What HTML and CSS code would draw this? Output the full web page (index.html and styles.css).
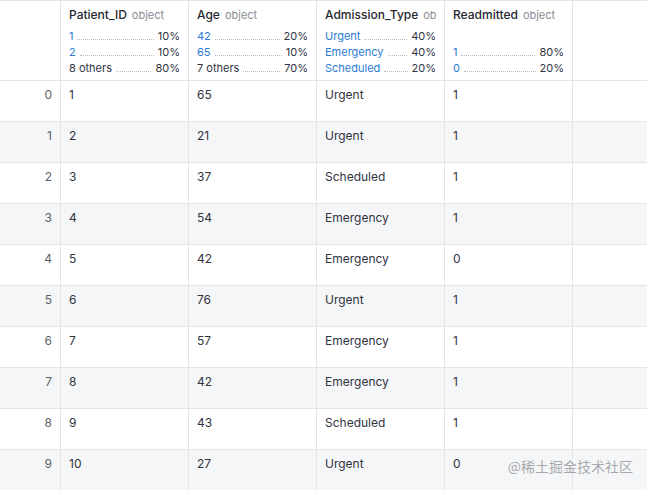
FILE: index.html
```html
<!DOCTYPE html>
<html>
<head>
<meta charset="utf-8">
<link rel="stylesheet" href="styles.css">
</head>
<body>
<div class="grid">
  <div class="hcell idx"></div>
  <div class="hcell">
    <div class="title"><span class="name">Patient_ID</span><span class="type">object</span></div>
    <div class="stats">
      <div class="stat"><span class="val">1</span><span class="dots"></span><span class="pct">10%</span></div>
      <div class="stat"><span class="val">2</span><span class="dots"></span><span class="pct">10%</span></div>
      <div class="stat"><span class="other">8 others</span><span class="dots"></span><span class="pct">80%</span></div>
    </div>
  </div>
  <div class="hcell">
    <div class="title"><span class="name">Age</span><span class="type">object</span></div>
    <div class="stats">
      <div class="stat"><span class="val">42</span><span class="dots"></span><span class="pct">20%</span></div>
      <div class="stat"><span class="val">65</span><span class="dots"></span><span class="pct">10%</span></div>
      <div class="stat"><span class="other">7 others</span><span class="dots"></span><span class="pct">70%</span></div>
    </div>
  </div>
  <div class="hcell">
    <div class="title"><span class="name">Admission_Type</span><span class="type">object</span></div>
    <div class="stats">
      <div class="stat"><span class="val">Urgent</span><span class="dots"></span><span class="pct">40%</span></div>
      <div class="stat"><span class="val">Emergency</span><span class="dots"></span><span class="pct">40%</span></div>
      <div class="stat"><span class="val">Scheduled</span><span class="dots"></span><span class="pct">20%</span></div>
    </div>
  </div>
  <div class="hcell">
    <div class="title"><span class="name">Readmitted</span><span class="type">object</span></div>
    <div class="stats">
      <div class="stat empty"></div>
      <div class="stat"><span class="val">1</span><span class="dots"></span><span class="pct">80%</span></div>
      <div class="stat"><span class="val">0</span><span class="dots"></span><span class="pct">20%</span></div>
    </div>
  </div>
  <div class="hcell last"></div>

  <div class="cell idx">0</div><div class="cell">1</div><div class="cell">65</div><div class="cell">Urgent</div><div class="cell">1</div><div class="cell last"></div>
  <div class="cell idx odd">1</div><div class="cell odd">2</div><div class="cell odd">21</div><div class="cell odd">Urgent</div><div class="cell odd">1</div><div class="cell odd last"></div>
  <div class="cell idx">2</div><div class="cell">3</div><div class="cell">37</div><div class="cell">Scheduled</div><div class="cell">1</div><div class="cell last"></div>
  <div class="cell idx odd">3</div><div class="cell odd">4</div><div class="cell odd">54</div><div class="cell odd">Emergency</div><div class="cell odd">1</div><div class="cell odd last"></div>
  <div class="cell idx">4</div><div class="cell">5</div><div class="cell">42</div><div class="cell">Emergency</div><div class="cell">0</div><div class="cell last"></div>
  <div class="cell idx odd">5</div><div class="cell odd">6</div><div class="cell odd">76</div><div class="cell odd">Urgent</div><div class="cell odd">1</div><div class="cell odd last"></div>
  <div class="cell idx">6</div><div class="cell">7</div><div class="cell">57</div><div class="cell">Emergency</div><div class="cell">1</div><div class="cell last"></div>
  <div class="cell idx odd">7</div><div class="cell odd">8</div><div class="cell odd">42</div><div class="cell odd">Emergency</div><div class="cell odd">1</div><div class="cell odd last"></div>
  <div class="cell idx">8</div><div class="cell">9</div><div class="cell">43</div><div class="cell">Scheduled</div><div class="cell">1</div><div class="cell last"></div>
  <div class="cell idx odd">9</div><div class="cell odd">10</div><div class="cell odd">27</div><div class="cell odd">Urgent</div><div class="cell odd">0</div><div class="cell odd last"></div>
</div>
<div class="watermark">@稀土掘金技术社区</div>
</body>
</html>
```
FILE: styles.css
```css
html, body {
  margin: 0;
  padding: 0;
  background: #fff;
  overflow: hidden;
}
body {
  width: 647px;
  height: 490px;
  position: relative;
  font-family: Inter, "Noto Sans", sans-serif;
  color: #31333f;
}
.grid {
  display: grid;
  grid-template-columns: 61px 128px 128px 128px 128px 1fr;
  grid-template-rows: 80px;
  grid-auto-rows: 41px;
  border-top: 1px solid #e4e5e8;
}
.hcell {
  height: 80px;
  box-sizing: border-box;
  border-right: 1px solid #e4e5e8;
  border-bottom: 1px solid #e4e5e8;
  padding: 3px 8px 0 8px;
  overflow: hidden;
}
.hcell.last { border-right: none; }
.title {
  height: 18px;
  line-height: 18px;
  white-space: nowrap;
  overflow: hidden;
}
.name {
  font-size: 12px;
  font-weight: 500;
  color: #262730;
}
.type {
  font-size: 11px;
  color: #8a8c94;
  margin-left: 5px;
}
.stats {
  margin-top: 6px;
  display: flex;
  flex-direction: column;
}
.stat {
  display: flex;
  align-items: baseline;
  height: 16px;
  line-height: 16px;
  font-size: 11px;
  white-space: nowrap;
}
.val { color: #2b7bd4; }
.other { color: #31333f; }
.pct { color: #31333f; }
.dots {
  flex: 1;
  margin: 0 4px;
  border-bottom: 1px dotted #b8bac0;
  height: 0;
  align-self: center;
  transform: translateY(3px);
}
.cell {
  box-sizing: border-box;
  border-right: 1px solid #e4e5e8;
  border-bottom: 1px solid #e4e5e8;
  padding: 5px 8px 0 8px;
  font-size: 12px;
  line-height: 18px;
  color: #31333f;
  white-space: nowrap;
  overflow: hidden;
}
.cell.last { border-right: none; }
.cell.idx {
  text-align: right;
  color: #5d5f66;
}
.cell.odd { background: #f5f6f8; }
.watermark {
  position: absolute;
  right: 14px;
  bottom: 14px;
  font-family: "Noto Sans CJK SC", sans-serif;
  font-size: 14px;
  color: rgba(140, 142, 148, 0.75);
  letter-spacing: 0;
}
```
